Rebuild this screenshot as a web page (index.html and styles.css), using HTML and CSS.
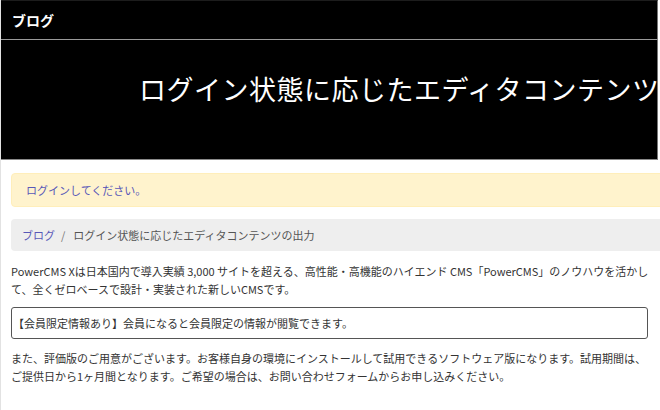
FILE: index.html
```html
<!DOCTYPE html>
<html lang="ja">
<head>
<meta charset="utf-8">
<title>ログイン状態に応じたエディタコンテンツの出力</title>
<link rel="stylesheet" href="styles.css">
</head>
<body>
<div class="page">
  <header class="site-header">
    <span class="brand">ブログ</span>
  </header>
  <section class="hero">
    <h1 class="hero-title">ログイン状態に応じたエディタコンテンツの出力</h1>
  </section>
  <main class="content">
    <div class="alert"><a href="#" class="link">ログインしてください。</a></div>
    <nav class="breadcrumb">
      <a href="#" class="link">ブログ</a>
      <span class="sep">/</span>
      <span class="current">ログイン状態に応じたエディタコンテンツの出力</span>
    </nav>
    <p class="text">PowerCMS Xは日本国内で導入実績 3,000 サイトを超える、高性能・高機能のハイエンド CMS「PowerCMS」のノウハウを活かして、全くゼロベースで設計・実装された新しいCMSです。</p>
    <div class="notice">【会員限定情報あり】会員になると会員限定の情報が閲覧できます。</div>
    <p class="text">また、評価版のご用意がございます。お客様自身の環境にインストールして試用できるソフトウェア版になります。試用期間は、ご提供日から1ヶ月間となります。ご希望の場合は、お問い合わせフォームからお申し込みください。</p>
  </main>
</div>
</body>
</html>
```
FILE: styles.css
```css
html, body {
  margin: 0;
  padding: 0;
  background: #fff;
}
body {
  font-family: "Noto Sans CJK JP", "Noto Sans", sans-serif;
  color: #333;
  overflow: hidden;
}
.page {
  width: 660px;
  min-height: 410px;
  border-left: 1px solid #e2e2e2;
  box-sizing: border-box;
  overflow: hidden;
}
.site-header {
  width: 658px;
  height: 40px;
  background: #000;
  border-top: 1px solid #1c1c1c;
  border-right: 1px solid #777;
  border-bottom: 1px solid #9a9a9a;
  box-sizing: border-box;
  display: flex;
  align-items: center;
  padding-left: 12px;
  margin-left: -1px;
}
.brand {
  color: #fff;
  font-size: 14px;
  font-weight: 700;
}
.hero {
  width: 658px;
  height: 120px;
  background: #000;
  border-right: 1px solid #777;
  border-bottom: 1px solid #8a8a8a;
  box-sizing: border-box;
  margin-left: -1px;
  overflow: hidden;
  padding-top: 29px;
  padding-left: 139px;
}
.hero-title {
  margin: 0;
  color: #fff;
  font-size: 27px;
  font-weight: 400;
  letter-spacing: 0.5px;
  line-height: 40px;
  white-space: nowrap;
}
.content {
  padding: 13px 0 0 10px;
  width: 646px;
  font-size: 11px;
  line-height: 18px;
}
.link {
  color: #5858b8;
  text-decoration: none;
}
.alert {
  background: #fff3cd;
  border: 1px solid #ffeeba;
  border-radius: 4px;
  margin-right: -40px;
  height: 34px;
  box-sizing: border-box;
  display: flex;
  align-items: center;
  padding-left: 14px;
}
.breadcrumb {
  background: #eeeeee;
  border-radius: 4px;
  margin-top: 12px;
  margin-right: -40px;
  height: 32px;
  box-sizing: border-box;
  display: flex;
  align-items: center;
  padding-left: 11px;
}
.sep {
  color: #777;
  margin: 0 8px 0 6px;
}
.current {
  color: #555;
}
.text {
  margin: 11px 0 0;
}
.notice {
  margin-top: 9px;
  width: 637px;
  border: 1px solid #555;
  border-radius: 3px;
  height: 32px;
  box-sizing: border-box;
  display: flex;
  align-items: center;
  padding-left: 1px;
}
.notice + .text {
  margin-top: 10px;
}
```
